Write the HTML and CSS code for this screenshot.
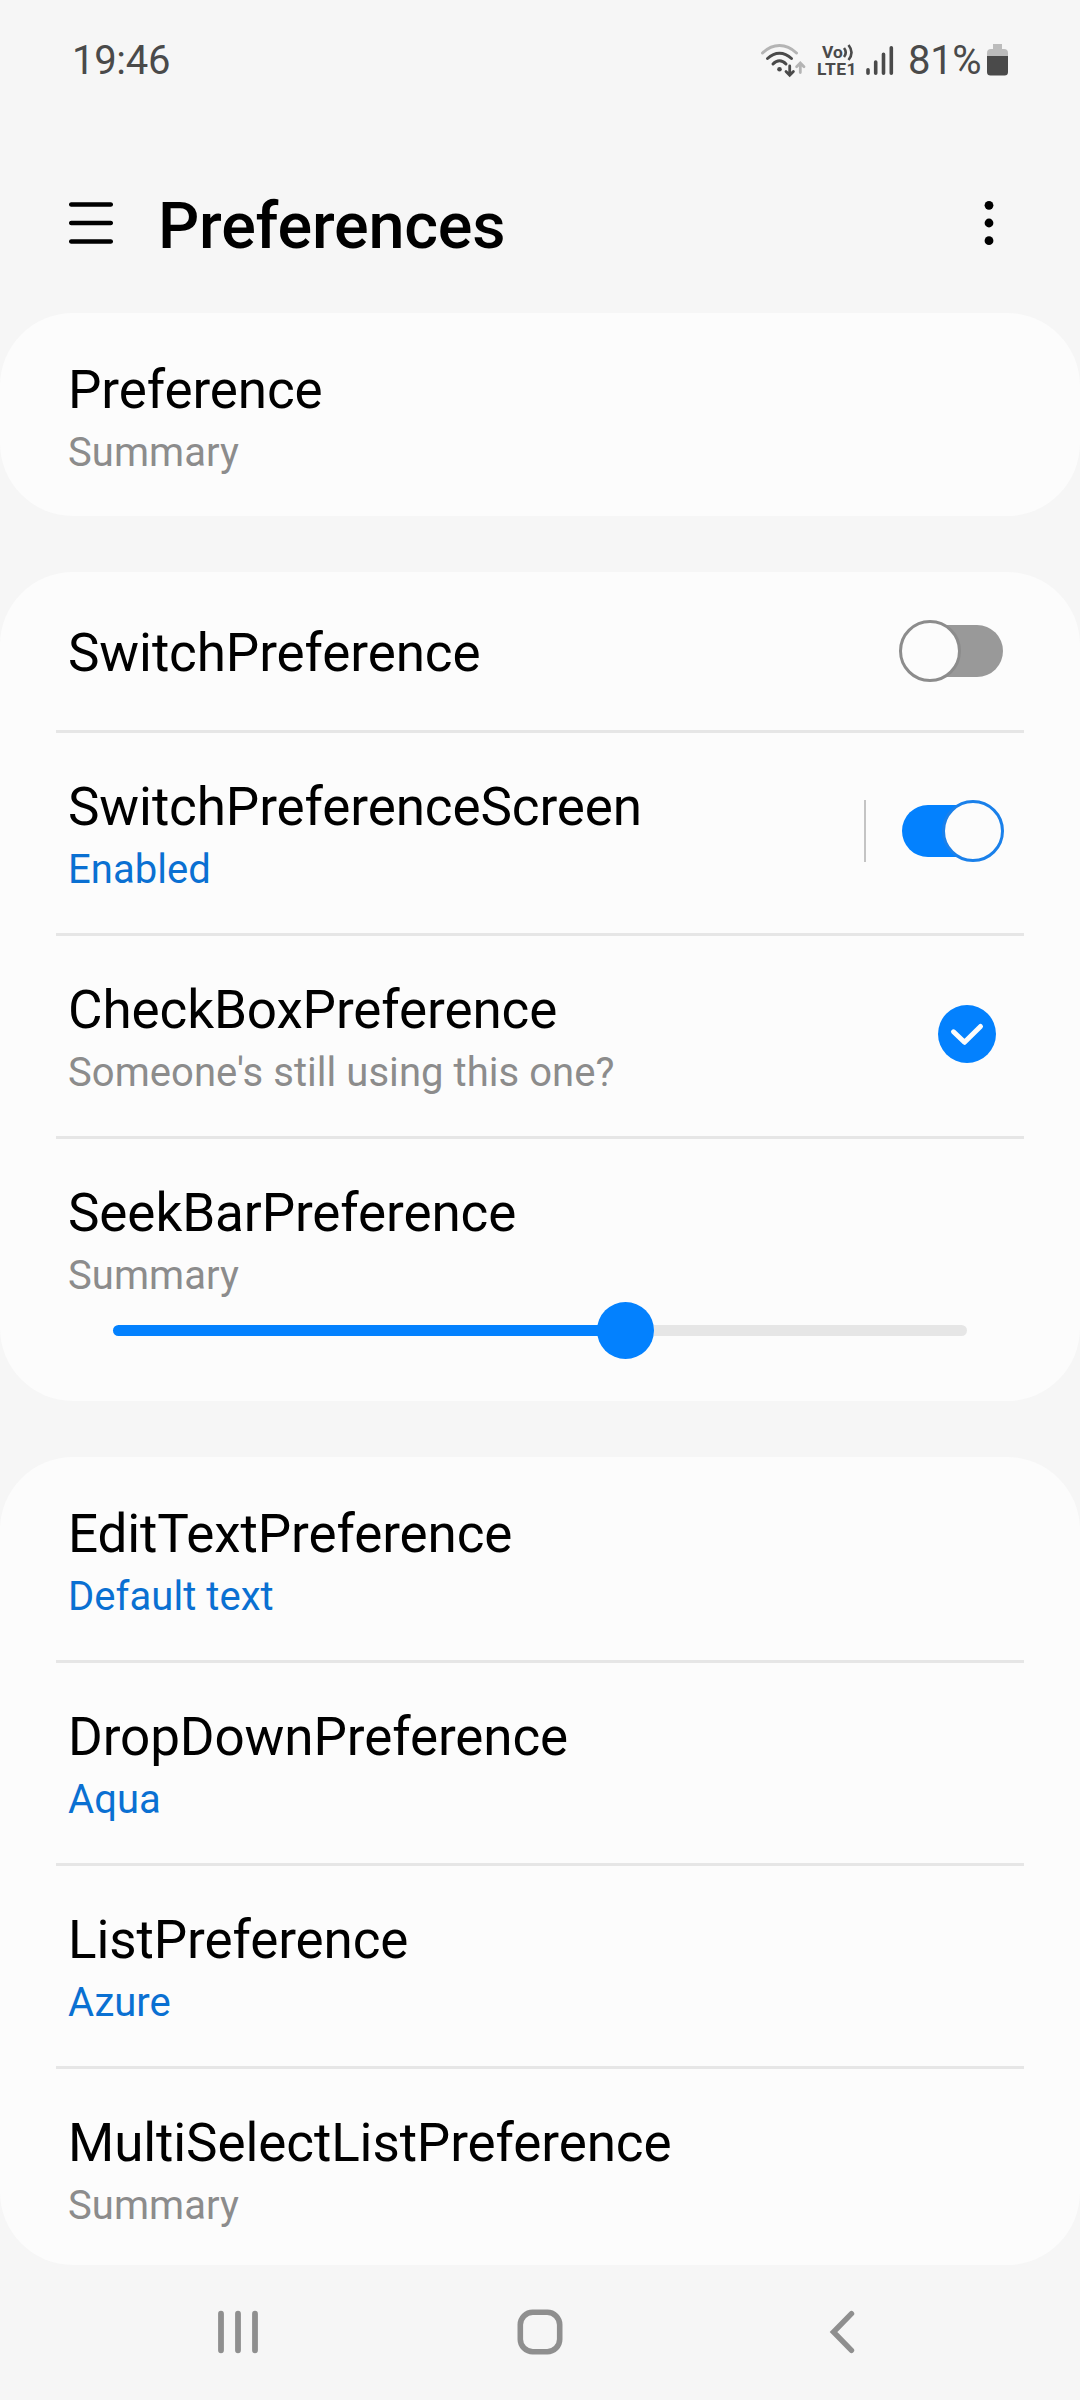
FILE: index.html
```html
<!DOCTYPE html>
<html lang="en">
<head>
<meta charset="utf-8">
<title>Preferences</title>
<link rel="stylesheet" href="styles.css">
</head>
<body>
<div class="screen">
  <header class="status">
    <span class="clock">19:46</span>
    <div class="status-icons">
      <svg class="wifi" width="46" height="36" viewBox="0 0 46 36" fill="none" stroke="#4a4a4a" stroke-width="3" stroke-linecap="round">
        <path d="M2.500 11C13 1 26 1 36.500 11" stroke="#b4b4b4"/>
        <path d="M7.500 16.500C15 9.500 24 9.500 31.500 16.500"/>
        <path d="M13 22C17 17.800 22 17.800 26 22"/>
        <circle cx="19.500" cy="27.200" r="2.300" fill="#4a4a4a" stroke="none"/>
        <path d="M29.700 24v8.500M26 29.500l3.700 3.700 3.700-3.700" stroke-width="2.800"/>
        <path d="M40.300 30.500v-9M36.600 24.700l3.700-3.700 3.700 3.700" stroke="#b4b4b4" stroke-width="2.800"/>
      </svg>
      <div class="volte">
        <span class="vo">Vo<svg width="12" height="17" viewBox="0 0 12 17" fill="none" stroke="#4a4a4a" stroke-width="2.600"><path d="M1 4q3.500 4.500 0 9M5.500 1q6 7.500 0 15"/></svg></span>
        <span>LTE1</span>
      </div>
      <svg class="signal" width="28" height="30" viewBox="0 0 28 30" stroke="#4a4a4a" stroke-width="3.600" stroke-linecap="round">
        <path d="M2 24.800v3.400M9.700 17v11.200M17.500 9.300v18.900M25.300 2.800v25.400"/>
      </svg>
      <span class="percent">81%</span>
      <svg class="battery" width="21" height="32" viewBox="0 0 21 32">
        <path d="M6 0h9v5h2q4 0 4 4v3H0V9q0-4 4-4h2z" fill="#bcbcbc"/>
        <path d="M0 12h21v16q0 3.500-3.500 3.500h-14Q0 31.500 0 28z" fill="#4a4a4a"/>
      </svg>
    </div>
  </header>
  <div class="toolbar">
    <svg class="menu" width="44" height="42" viewBox="0 0 44 42" stroke="#000" stroke-width="4.500" stroke-linecap="round">
      <path d="M2.200 2.500h39.600M2.200 21h39.600M2.200 39.500h39.600"/>
    </svg>
    <h1>Preferences</h1>
    <svg class="more" width="10" height="46" viewBox="0 0 10 46"><circle cx="5" cy="5.300" r="4.400"/><circle cx="5" cy="23" r="4.400"/><circle cx="5" cy="40.700" r="4.400"/></svg>
  </div>
  <main>
    <section class="card">
      <div class="row"><div class="text"><h2>Preference</h2><p>Summary</p></div></div>
    </section>
    <section class="card">
      <div class="row single"><div class="text"><h2>SwitchPreference</h2></div>
        <div class="switch"><i class="thumb"></i></div></div>
      <div class="row"><div class="text"><h2>SwitchPreferenceScreen</h2><p class="value">Enabled</p></div>
        <i class="bar"></i><div class="switch on"><i class="thumb"></i></div></div>
      <div class="row"><div class="text"><h2>CheckBoxPreference</h2><p>Someone's still using this one?</p></div>
        <svg class="check" width="58" height="58" viewBox="0 0 58 58" fill="none"><circle cx="29" cy="29" r="29" fill="#0381fe"/><path d="M15.500 26.800L26.500 37.300L42.500 21.500" stroke="#fcfcfc" stroke-width="5" stroke-linecap="round" stroke-linejoin="round"/></svg></div>
      <div class="row seek"><div class="text"><h2>SeekBarPreference</h2><p>Summary</p></div>
        <div class="track"><i class="fill"></i><i class="knob"></i><i class="rest"></i></div></div>
    </section>
    <section class="card">
      <div class="row"><div class="text"><h2>EditTextPreference</h2><p class="value">Default text</p></div></div>
      <div class="row"><div class="text"><h2>DropDownPreference</h2><p class="value">Aqua</p></div></div>
      <div class="row"><div class="text"><h2>ListPreference</h2><p class="value">Azure</p></div></div>
      <div class="row clipped"><div class="text"><h2>MultiSelectListPreference</h2><p>Summary</p></div></div>
    </section>
  </main>
  <nav class="nav">
    <svg width="40" height="58" viewBox="0 0 40 58" stroke="#8f8f8f" stroke-width="5.800" stroke-linecap="round"><path d="M3 10.700v36.600M20 10.700v36.600M37 10.700v36.600"/></svg>
    <svg class="home" width="46" height="58" viewBox="0 0 46 58" fill="none" stroke="#8f8f8f" stroke-width="5.600"><rect x="3.300" y="9.300" width="39.400" height="39.400" rx="12.500"/></svg>
    <svg width="26" height="58" viewBox="0 0 26 58" fill="none" stroke="#8f8f8f" stroke-width="5.400" stroke-linecap="round"><path d="M22.500 10.700L4.500 29L22.500 47.300"/></svg>
  </nav>
</div>
</body>
</html>
```
FILE: styles.css
```css
* { box-sizing: border-box; }
body { margin: 0; background: #f6f6f6; font-family: Roboto, sans-serif; color: #000; }
h1, h2, p { margin: 0; font-weight: 400; white-space: nowrap; }
svg { display: block; flex: none; }
i { display: block; flex: none; }
.screen { width: 1080px; height: 2400px; display: flex; flex-direction: column; overflow: hidden; }

.status { height: 120px; padding: 0 72px; display: flex; justify-content: space-between; align-items: center; color: #4a4a4a; }
.clock, .percent { font-size: 40px; line-height: 47px; letter-spacing: -0.3px; padding-top: 1px; }
.status-icons { display: flex; align-items: center; }
.volte { width: 42px; margin: 2px 0 0 11px; display: flex; flex-direction: column; font-size: 17.4px; line-height: 17px; font-weight: 700; white-space: nowrap; letter-spacing: 0.5px; }
.vo { display: flex; align-items: center; padding-left: 5px; letter-spacing: 0; }
.signal { margin-left: 7px; }
.percent { width: 74px; margin-left: 14px; }
.battery { margin-left: 5px; }

.toolbar { height: 193px; padding: 13px 86px 0 69px; display: flex; align-items: center; }
h1 { margin: 5px auto 0 45px; font-size: 64.7px; line-height: 76px; font-weight: 500; letter-spacing: -0.2px; }

main { display: flex; flex-direction: column; gap: 56px; }
.card { background: #fcfcfc; border-radius: 73px; padding-top: 3px; }
.row { position: relative; height: 203px; padding: 0 76px 7px 68px; display: flex; align-items: center; }
.row:not(:last-child)::after { content: ""; position: absolute; left: 56px; right: 56px; bottom: 0; height: 3px; background: #e6e6e6; }
.card .row:only-child { height: 200px; }
.text { flex: 1; align-self: flex-start; padding-top: 43px; }
h2 { font-size: 53px; line-height: 62px; letter-spacing: -0.1px; }
p { font-size: 40px; line-height: 47px; color: #8c8c8c; margin-top: 8px; letter-spacing: 0.05px; }
.value { color: #0a70d2; }
.single { height: 158px; padding-bottom: 6px; }
.single .text { padding-top: 47px; }

.switch { position: relative; width: 105px; height: 62px; display: flex; align-items: center; }
.switch::before { content: ""; position: absolute; left: 3px; top: 5px; width: 101px; height: 52px; border-radius: 26px; background: #999; }
.thumb { position: relative; width: 62px; height: 62px; border-radius: 50%; border: 3px solid #8c8c8c; background: #fcfcfc; }
.on { justify-content: flex-end; }
.on::before { background: #0381fe; }
.on .thumb { border-color: #1a80ea; }
.bar { width: 2px; height: 62px; background: #c4c4c4; margin-right: 33px; }
.check { margin-right: 8px; }

.seek { height: 262px; padding-bottom: 0; flex-direction: column; align-items: stretch; }
.seek .text { flex: none; }
.track { display: flex; align-items: center; margin: 3px 37px 0 45px; }
.fill { width: 484px; height: 11px; border-radius: 6px 0 0 6px; background: #0381fe; box-shadow: 4px 0 #0381fe; }
.knob { width: 57px; height: 57px; border-radius: 50%; background: #0381fe; }
.rest { flex: 1; height: 11px; border-radius: 0 6px 6px 0; background: #e6e6e6; }
.clipped { height: 196px; }

.nav { flex: 1; padding: 0 225px 1px 218px; display: flex; align-items: center; }
.home { margin: 0 266px 0 259px; }
```
